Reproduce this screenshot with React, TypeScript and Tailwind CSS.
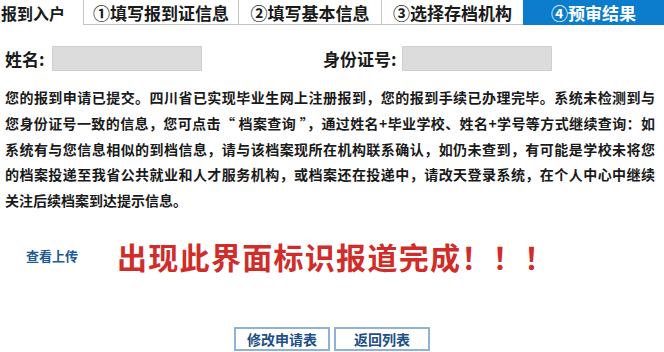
import React from "react";

const lines = [
  "您的报到申请已提交。四川省已实现毕业生网上注册报到，您的报到手续已办理完毕。系统未检测到与",
  "您身份证号一致的信息，您可点击“ 档案查询 ”，通过姓名+毕业学校、姓名+学号等方式继续查询：如",
  "系统有与您信息相似的到档信息，请与该档案现所在机构联系确认，如仍未查到，有可能是学校未将您",
  "的档案投递至我省公共就业和人才服务机构，或档案还在投递中，请改天登录系统，在个人中心中继续",
];

export default function App() {
  return (
    <div className="w-[664px] h-[352px] bg-white overflow-hidden font-['Noto_Sans_CJK_SC',sans-serif] text-[#1a1a1a]">
      {/* tab bar */}
      <div className="flex h-[25px]">
        <div className="w-[83px] pl-[1px] flex items-center text-[16px] font-bold leading-none">报到入户</div>
        <div className="w-[155px] border-l border-b border-[#c4c4c4] flex items-center justify-center text-[17px] font-bold leading-none">①填写报到证信息</div>
        <div className="w-[143px] border-l border-b border-[#c4c4c4] flex items-center justify-center text-[17px] font-bold leading-none">②填写基本信息</div>
        <div className="w-[142px] border-l border-b border-[#c4c4c4] flex items-center justify-center text-[17px] font-bold leading-none">③选择存档机构</div>
        <div className="flex-1 bg-[#0b7dcc] flex items-center justify-center text-[17px] font-bold leading-none text-white">④预审结果</div>
      </div>

      {/* name row */}
      <div className="flex items-center mt-[21px] h-[25px]">
        <div className="w-[323px] flex items-center pl-[5px]">
          <span className="w-[47px] text-[17px] font-bold leading-none">姓名:</span>
          <div className="w-[150px] h-[25px] bg-[#dcdcdc] border border-[#d0d0d0]" />
        </div>
        <div className="flex items-center">
          <span className="w-[79px] text-[17px] font-bold leading-none">身份证号:</span>
          <div className="w-[150px] h-[25px] bg-[#dcdcdc] border border-[#d0d0d0]" />
        </div>
      </div>

      {/* paragraph */}
      <div className="mt-[14px] ml-[5px] w-[650px] text-[14px] font-semibold leading-[25.8px]">
        {lines.map((l, i) => (
          <div key={i} className="text-justify [text-align-last:justify]">{l}</div>
        ))}
        <div>关注后续档案到达提示信息。</div>
      </div>

      {/* red notice row */}
      <div className="flex items-center mt-[22px] h-[40px]">
        <span className="ml-[26px] w-[91px] text-[13px] font-bold text-[#1d5a96] leading-none">查看上传</span>
        <span className="text-[30px] font-bold text-[#d02c29] leading-none tracking-[1.3px]">出现此界面标识报道完成！！！</span>
      </div>

      {/* buttons */}
      <div className="flex justify-center gap-[4px] mt-[51px]">
        <button className="w-[96px] h-[24px] border-2 border-[#8fb2d6] bg-white text-[14px] font-bold text-[#1d4f86] leading-none flex items-center justify-center">修改申请表</button>
        <button className="w-[96px] h-[24px] border-2 border-[#8fb2d6] bg-white text-[14px] font-bold text-[#1d4f86] leading-none flex items-center justify-center">返回列表</button>
      </div>
    </div>
  );
}
